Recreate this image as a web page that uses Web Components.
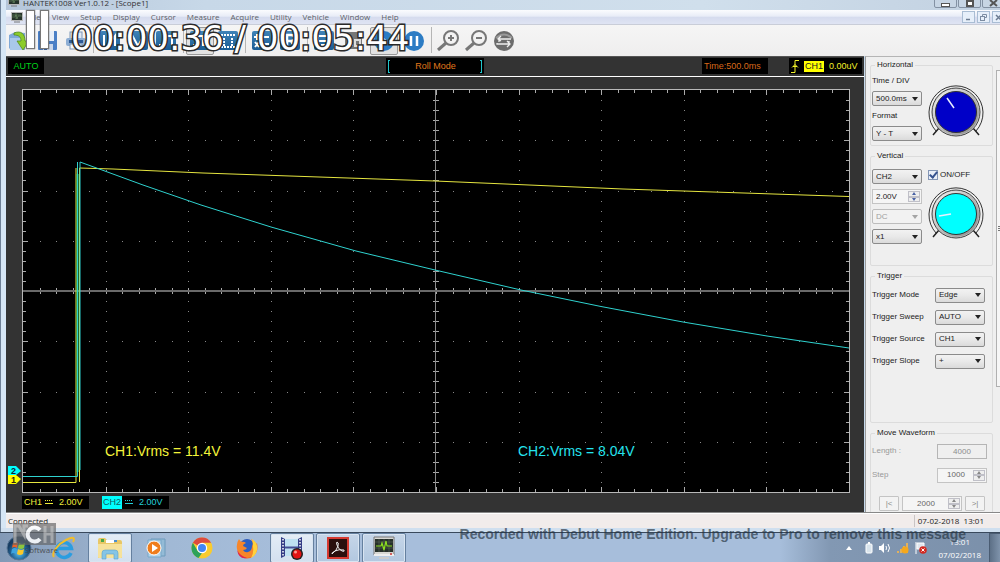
<!DOCTYPE html>
<html lang="en">
<head>
<meta charset="utf-8">
<title>HANTEK1008 - Scope1</title>
<style>
html,body{margin:0;height:100%}
body{font-family:"Liberation Sans",Arial,sans-serif;font-size:8px;line-height:10px;color:#222;overflow:hidden;--ui:"Open Sans","Noto Sans",sans-serif}
</style>
</head>
<body>
<desktop-screen></desktop-screen>
<script>
class Base extends HTMLElement {
  connectedCallback() {
    if (this.shadowRoot) return;
    const t = document.createElement('template');
    t.innerHTML = `<style>*{box-sizing:border-box}button,input,select{font:inherit;color:inherit;margin:0}${this.css()}</style>${this.html()}`;
    this.attachShadow({ mode: 'open' }).append(t.content.cloneNode(true));
  }
  css() { return ':host{display:block}'; }
  html() { return '<slot></slot>'; }
  attr(n, d = '') { return this.getAttribute(n) ?? d; }
}
const def = (name, css, html) => customElements.define(name, class extends Base {
  css() { return css; }
  html() { return typeof html === 'function' ? html(this) : html; }
});

/* ---------- window chrome ---------- */
const scopeIcon = `<svg width="12" height="11" viewBox="0 0 12 11"><rect x="0" y="0" width="12" height="9" fill="#b9b9b9"/><rect x="1" y="1" width="10" height="7" fill="#26332a"/><path d="M1 5h3l1-2 1 4 1-3h4M1 3h9M5 1v6" stroke="#6d8f63" stroke-width=".6" fill="none"/><path d="M3 10h6" stroke="#777"/></svg>`;

def('title-bar', `
:host{display:flex;height:10px;align-items:flex-end;justify-content:space-between;padding-left:2px;overflow:hidden;
 font-family:var(--ui);background:linear-gradient(90deg,#b5c6da,#c7d8e8 20%,#d0dfec 70%,#c2d1e1);color:#333}
.name{display:flex;gap:3px;align-items:flex-end;height:10px}
.name span{line-height:10px;height:12px}
svg{flex:none;margin-bottom:3px}
.btns{display:flex;gap:1px;margin-right:-5px}
button{width:23px;height:13px;margin-bottom:2px;border:1px solid #8391a3;border-radius:0 0 2px 2px;background:#c7d5e4;padding:0;display:grid;place-items:center}
button svg{margin:4px 0 0}`,
`<div class="name">${scopeIcon}<span>HANTEK1008 Ver1.0.12 - [Scope1]</span></div>
<div class="btns">
<button aria-label="Minimize"><svg width="9" height="6"><rect x=".5" y="2.5" width="8" height="3" fill="#fff" stroke="#555"/></svg></button>
<button aria-label="Maximize"><svg width="8" height="7"><rect x="1" y="1" width="6" height="5" fill="#fff" stroke="#555" stroke-width="2"/></svg></button>
<button aria-label="Close"><svg width="9" height="7"><path d="M1 0l7 6M8 0L1 6" stroke="#555" stroke-width="2"/></svg></button>
</div>`);

def('menu-bar', `
:host{display:flex;height:15px;align-items:center;padding-left:5px;font-family:var(--ui);color:#5c5f68;
 background:linear-gradient(#fbfcfe,#e8ecf7 45%,#d5dbee 50%,#dfe4f3);border-bottom:1px solid #c9cdd8}
nav{display:flex;gap:11px;margin-left:5px;flex:1}
a{color:inherit;text-decoration:none}
.mdi{display:flex;gap:2px;margin-right:-5px}
button{width:13px;height:12px;border:1px solid #a9bdd4;background:#e6effa;padding:0;display:grid;place-items:center}`,
`${scopeIcon}<nav>${['File','View','Setup','Display','Cursor','Measure','Acquire','Utility','Vehicle','Window','Help'].map(t=>`<a href="#">${t}</a>`).join('')}</nav>
<div class="mdi">
<button aria-label="Minimize child"><svg width="7" height="7"><path d="M1 5.500h4" stroke="#6c7c92" stroke-width="1.500"/></svg></button>
<button aria-label="Restore child"><svg width="7" height="7" fill="none" stroke="#7c8ca2"><path d="M2.500 2V.5h4v3H5"/><rect x=".5" y="2.500" width="4" height="4"/></svg></button>
<button aria-label="Close child"><svg width="7" height="7"><path d="M1 1l5 5M6 1L1 6" stroke="#6c7c92" stroke-width="1.500"/></svg></button>
</div>`);

/* ---------- toolbar ---------- */
const sq = g => `<svg width="22" height="22" viewBox="0 0 22 22"><defs><linearGradient id="b" x2="0" y2="1"><stop stop-color="#3f83b8"/><stop offset="1" stop-color="#1a5c94"/></linearGradient></defs><rect x="1" y="1" width="20" height="19" rx="2" fill="url(#b)"/><g stroke="#fff" stroke-width="2" fill="none">${g}</g></svg>`;
const icons = {
  open: `<svg width="28" height="22" viewBox="0 0 28 22"><path d="M2 5l6-3 10 1v17H4l-2-2z" fill="#7fa9d8"/><path d="M3 8h14v12H3z" fill="#a9c8ea"/><path d="M7 3c7-3 11 1 11 8h4l-6 9-6-9h4c0-4-2-6-7-6z" fill="#8ccc2a" stroke="#4b8411" stroke-width=".7"/></svg>`,
  save: `<svg width="20" height="22" viewBox="0 0 20 22"><rect x="0" y="1" width="19" height="19" rx="1" fill="#4a7fc6"/><rect x="3" y="1" width="13" height="10" fill="#e6eef9"/><rect x="5" y="14" width="10" height="6" fill="#c9d6ea"/><rect x="6" y="15" width="3" height="5" fill="#35609f"/></svg>`,
  print: `<svg width="22" height="22" viewBox="0 0 22 22"><rect x="5" y="2" width="12" height="7" fill="#dfe8f3" stroke="#7d97b8"/><rect x="1" y="8" width="20" height="8" rx="2" fill="#8eaed4"/><rect x="4" y="10" width="14" height="3" fill="#2d5b98"/><rect x="5" y="14" width="12" height="5" fill="#f6f9fd" stroke="#7d97b8"/></svg>`,
  a: sq('<path d="M5 5v11M9 15l7-9v10"/>'),
  b: sq('<path d="M5 5l6 11 6-11"/>'),
  c: sq('<path d="M4 15h5V6h8M17 6v9"/>'),
  d: sq('<path d="M4 15h3V6h7v9h4"/>'),
  e: sq('<path d="M4 5h14M7 8v8M15 8v8M4 17h14" stroke-dasharray="2 1"/>'),
  f: sq('<path d="M3 7h6M6 4v6M12 7h6M4 12l4 5M8 12l-4 5M12 14h6M12 17h6"/>'),
  g: sq('<path d="M8 17V5h4q4 0 4 3t-4 3H8m4 0l4 6" stroke-width="2.500"/>'),
  h: sq('<path d="M5 6h12v5H5zM8 15h7"/>'),
  i: `<svg width="20" height="22" viewBox="0 0 20 22"><rect x="1" y="2" width="17" height="17" rx="2" fill="#777"/><path d="M5 5v10h4M11 10h5v6h-5z" stroke="#ddd" stroke-width="2" fill="none"/></svg>`,
  play: `<svg width="22" height="22" viewBox="0 0 22 22"><circle cx="11" cy="11" r="10" fill="#2c7cc4"/><path d="M8 6l7 5-7 5z" fill="#e6f2fc"/></svg>`,
  pause: `<svg width="22" height="22" viewBox="0 0 22 22"><circle cx="11" cy="11" r="10" fill="#2c7cc4"/><path d="M8 6v10M14 6v10" stroke="#fff" stroke-width="2.500"/></svg>`,
  zin: `<svg width="24" height="22" viewBox="0 0 24 22" fill="none" stroke="#777"><circle cx="15" cy="8" r="7" stroke-width="2"/><path d="M10 13l-8 7" stroke-width="3"/><path d="M12 8h6M15 5v6" stroke-width="2"/></svg>`,
  zout: `<svg width="24" height="22" viewBox="0 0 24 22" fill="none" stroke="#777"><circle cx="15" cy="8" r="7" stroke-width="2"/><path d="M10 13l-8 7" stroke-width="3"/><path d="M12 8h6" stroke-width="2"/></svg>`,
  swap: `<svg width="22" height="22" viewBox="0 0 22 22"><circle cx="11" cy="11" r="10" fill="#6c6c6c"/><path d="M3 8q8-7 16 0" stroke="#999" stroke-width="2" fill="none"/><path d="M18 9H6v3M8 6L5 9l3 2M4 13v1h12v-3M14 17l3-3-3-3" stroke="#eee" stroke-width="1.300" fill="none"/></svg>`
};
def('tool-button', `
:host{display:block;width:28px}
button{width:28px;height:28px;padding:0;border:1px solid transparent;background:none;display:grid;place-items:center}
:host([pressed]) button{border-color:#999;background:#e2e2e2;border-radius:2px}`,
e => `<button aria-label="${e.attr('label')}">${icons[e.attr('icon')]}</button>`);
const tb = (i, l, p = '') => `<tool-button icon="${i}" label="${l}" ${p}></tool-button>`;
def('tool-bar', `
:host{display:flex;height:31px;align-items:center;background:linear-gradient(#f5f5f5,#efeeee)}
.g{display:flex}.w{gap:2px}
.g+.g::before{content:"";width:1px;height:26px;background:#b5b5b5;margin:0 2px 0 3px}
.w::before{margin-right:0 !important}`,
`<div class="g">${tb('open','Open')+tb('save','Save')+tb('print','Print')}</div>
<div class="g">${tb('a','Cursor trace')+tb('b','Falling')+tb('c','Rising')}</div>
<div class="g">${tb('d','Square','pressed')+tb('e','Pulse')}</div>
<div class="g">${tb('f','Math')+tb('g','Reference')}</div>
<div class="g w">${tb('h','Display')+tb('i','Log')+tb('play','Run','pressed')+tb('pause','Pause')}</div>
<div class="g">${tb('zin','Zoom in')+tb('zout','Zoom out')+tb('swap','Swap')}</div>`);

/* ---------- oscilloscope ---------- */
def('scope-readout', `
:host{display:flex;height:20px;padding:1px 2px 2px;background:#333;border-bottom:1px solid #fff;font-size:9px;box-sizing:border-box;justify-content:space-between}
div{background:#000;display:flex;align-items:center;white-space:nowrap}
.auto{color:#00d21c;width:36px;justify-content:center}
.l{flex:343 0 0}.m{flex:218 0 0}.r{flex:21 0 0}
.roll{width:98px;color:#e0781c;justify-content:space-between;padding:0 2px}
.roll b{width:2px;height:13px;border:1px solid #21c6cc;border-width:1px 0 1px 1px}
.roll b:last-child{border-width:1px 1px 1px 0}
.time{color:#d8691a;width:66px;padding-left:2px}
.trig{color:#f2f22a;width:73px;gap:5px;padding-left:2px}
.trig mark{background:#ff0;color:#222;padding:0 1px;line-height:11px}`,
`<div class="auto">AUTO</div><i class="l"></i><div class="roll"><b></b><span>Roll Mode</span><b></b></div><i class="m"></i>
<div class="time">Time:500.0ms</div><i class="r"></i>
<div class="trig"><svg width="8" height="13" viewBox="0 0 8 13" fill="none" stroke="#f2f22a"><path d="M0 12.500h4V.5h4M1 7.500l3-3 3 3M2 6.500h4"/></svg><mark>CH1</mark><span>0.00uV</span></div>`);

function gridSvg() {
  const W = 826, H = 402, dx = W / 50, dy = H / 40;
  let dots = '', ticks = '';
  for (let i = 1; i < 50; i++) {
    const x = Math.round(i * dx) + .5, big = i % 5 === 0 ? 5 : 3;
    ticks += `M${x} 0v${big}M${x} ${H}v-${big}M${x} 198v6`;
    for (let r = 1; r < 8; r++) if (r !== 4) dots += `M${x - .5} ${Math.round(r * H / 8) + .5}h1`;
  }
  for (let j = 1; j < 40; j++) {
    const y = Math.round(j * dy) + .5, big = j % 5 === 0 ? 5 : 3;
    ticks += `M0 ${y}h${big}M${W} ${y}h-${big}M410 ${y}h6`;
    for (let c = 1; c < 10; c++) if (c !== 5) dots += `M${Math.round(c * W / 10)} ${y}h1`;
  }
  return `<svg viewBox="0 0 ${W} ${H}" preserveAspectRatio="none" fill="none" aria-label="Waveforms">
<path d="${dots}" stroke="#888"/><path d="${ticks}" stroke="#aaa"/>
<path d="M412.500 0V402" stroke="#8a8a8a"/><path d="M0 201H826" stroke="#6a6a6a" stroke-width="2"/>
<path d="M0 392.500H53V78M56.500 392V78L90 79 180 83 412 91 600 99 826 106.500" stroke="#e6e640"/>
<path d="M54.500 84V382" stroke="#3fd05a" stroke-width="2"/>
<path d="M0 386.500H54.500V72M57 380V72L79 80 120 95 178 115 248 137 333 161 412 180 498 200 578 216.500 660 232 744 246 826 258" stroke="#2fd2cf"/>
</svg>`;
}
def('scope-plot', `
:host{display:grid;grid-template-rows:minmax(0,1fr);border:1px solid #b8b8b8;background:#000;min-height:0;overflow:hidden}
svg{grid-area:1/1;width:100%;height:100%;min-height:0;display:block}
.m{grid-area:1/1;align-self:end;display:grid;grid-template-columns:1fr 1fr;z-index:1;font-size:14px;line-height:16px;padding-bottom:33px}
span{padding-left:82px}.a{color:#f4f43a}.b{color:#25e3ee}`,
`${gridSvg()}<div class="m"><span class="a">CH1:Vrms = 11.4V</span><span class="b">CH2:Vrms = 8.04V</span></div>`);

def('scope-view', `
:host{display:grid;grid-template-rows:20px minmax(0,1fr) 19px;background:#333;min-width:0;min-height:0;border-top:1px solid #555;box-sizing:border-box}
.body{display:grid;grid-template-columns:16px 1fr 14px;grid-template-rows:minmax(0,1fr);padding-top:12px;min-height:0}
.gut{display:flex;flex-direction:column;justify-content:flex-end;padding:0 0 8px 2px}
.gut svg{display:block}
.ch{display:flex;gap:13px;padding:3px 16px 3px;font-size:9px}
.ch div{background:#000;width:67px;display:flex;gap:3px;align-items:center;padding-left:2px;white-space:nowrap;line-height:13px}
.ch .v{margin-left:3px}
.c1{color:#eeee3a}.c2{color:#23d2dc}
.c2{padding-left:0 !important}
mark{background:#0ff;color:#12595e;padding:0 1px}`,
`<scope-readout></scope-readout>
<div class="body"><div class="gut"><svg width="13" height="19" viewBox="0 0 13 19" font-family="Liberation Sans" font-size="9" font-weight="bold"><path d="M0 9h8l5 4-5 5H0z" fill="#ff0"/><path d="M0 0h8l5 5-5 4H0z" fill="#0ff"/><text x="3" y="8" fill="#123">2</text><text x="3" y="17" fill="#321">1</text></svg></div>
<scope-plot></scope-plot></div>
<div class="ch"><div class="c1"><span>CH1</span><svg width="8" height="5" stroke="#eeee3a"><path d="M0 .5h8" stroke-dasharray="1 1"/><path d="M0 3.500h8"/></svg><span class="v">2.00V</span></div>
<div class="c2"><mark>CH2</mark><svg width="8" height="5" stroke="#23d2dc"><path d="M0 .5h8" stroke-dasharray="1 1"/><path d="M0 3.500h8"/></svg><span class="v">2.00V</span></div></div>`);

/* ---------- side panel controls ---------- */
def('combo-box', `
:host{display:grid;width:50px;height:15px}
select{grid-area:1/1;appearance:none;width:100%;height:15px;border:1px solid #8b8b8b;border-radius:2px;padding:0 0 0 3px;background:linear-gradient(#f2f2f2,#e9e9e9 50%,#dadada);line-height:12px;color:#222;opacity:1}
i{grid-area:1/1;justify-self:end;align-self:center;margin-right:4px;border:3px solid transparent;border-top:4px solid #222;border-bottom:0;pointer-events:none}
:host([disabled]) select{color:#a0a0a0;background:#f2f2f2;border-color:#bdbdbd}
:host([disabled]) i{border-top-color:#a5a5a5}`,
e => `<select aria-label="${e.attr('label')}" ${e.hasAttribute('disabled') ? 'disabled' : ''}><option>${e.attr('value')}</option></select><i></i>`);

def('spin-box', `
:host{display:grid;grid-template-columns:1fr 12px;width:var(--w,50px);height:15px;border:1px solid #c4c4c4;padding:1px;box-sizing:border-box;background:#f5f5f5}
input{width:100%;min-width:0;border:0;padding:0 2px;background:none;text-align:var(--al,center);color:var(--c,#666)}
div{display:grid;grid-template-rows:1fr 1fr;min-height:0}
button{padding:0;border:1px solid #c0c0c8;background:#eee;display:grid;place-items:center;min-height:0;overflow:hidden;color:var(--ac,#888)}
svg{display:block}`,
e => `<input type="text" aria-label="${e.attr('label')}" value="${e.attr('value')}"><div>
<button aria-label="Increase"><svg width="4" height="3" fill="currentColor"><path d="M0 3l2-3 2 3z"/></svg></button>
<button aria-label="Decrease"><svg width="4" height="3" fill="currentColor"><path d="M0 0l2 3 2-3z"/></svg></button></div>`);

def('dial-knob', `:host{display:block;width:56px;height:52px}svg{display:block}`,
e => `<svg width="56" height="52" viewBox="0 0 56 52" fill="none" role="img" aria-label="${e.attr('label')}">
<defs><linearGradient id="r" x1="0" y1="0" x2="1" y2="1"><stop stop-color="#f6f6f6"/><stop offset=".5" stop-color="#bbb"/><stop offset="1" stop-color="#888"/></linearGradient></defs>
<path d="M8 46A27 27 0 1 1 48 46" stroke="#333"/><path d="M11 43l-6 7M45 43l6 7" stroke="#222" stroke-width="1.500"/>
<circle cx="28" cy="27" r="24" fill="#ccc" stroke="#444"/><circle cx="28" cy="27" r="23" fill="url(#r)"/>
<circle cx="28" cy="27" r="20.500" fill="${e.attr('color')}" stroke="#333"/>
<path d="${e.attr('mark')}" stroke="#e9efff" stroke-width="1.500"/></svg>`);

def('group-box', `
:host{display:block}
fieldset{margin:0;border:1px solid #dcdcdc;border-radius:2px;height:100%;min-width:0;padding:0 0 0 1px}
legend{margin-left:3px;padding:0 2px;line-height:10px;height:10px}
`, e => `<fieldset><legend>${e.attr('legend')}</legend><slot></slot></fieldset>`);

def('side-panel', `
:host{display:grid;grid-template-columns:1fr 4px;width:135px;background:#efefef;border-left:1px solid #9a9a9a;border-top:1px solid #b5b5b5;box-sizing:border-box;overflow:hidden;min-height:0}
.col{display:flex;flex-direction:column;gap:5px;padding:3px 3px 0 4px;min-width:0;min-height:0}
.col>*{flex:none}
.strip{border-left:1px solid #b0b0b0;border-top:1px solid #b0b0b0;border-bottom:1px solid #b0b0b0;background:#f6f6f6;margin-top:13px;height:317px;display:grid;align-items:center;justify-items:end}
.strip::before{content:"";width:2px;height:6px;background:repeating-linear-gradient(#777 0 1px,transparent 1px 2px)}
.h{height:86px}.v{height:115px}.t{height:152px}.m{height:100px}
.two{display:grid;grid-template-columns:50px 56px;gap:6px}
.stack{display:flex;flex-direction:column;gap:5px}
.h .stack{padding-top:6px}
.h dial-knob{margin-top:15px}
.v .stack{padding-top:8px}
.v .knob{padding-top:8px;display:flex;flex-direction:column;gap:6px}
.v .knob label{display:flex;gap:2px;align-items:center;white-space:nowrap;height:12px}
input[type=checkbox]{appearance:none;width:10px;height:10px;border:1px solid #8496b5;background:#e9eef8;display:grid;place-items:center}
input[type=checkbox]::before{content:"";width:3px;height:6px;border:solid #35528f;border-width:0 2px 2px 0;transform:rotate(40deg);margin-top:-2px}
.row{display:grid;grid-template-columns:1fr auto;align-items:center;height:22px;padding-right:7px}
.t .rows{padding-top:3px}
.m .row{height:24px;color:#999;padding-right:5px}
.m .rows{padding-top:1px}
.m input{width:50px;height:15px;border:1px solid #b5b5b5;background:#efefef;text-align:center;color:#8d8d8d;padding:0}
.nav{display:grid;grid-template-columns:20px 60px 20px;gap:3px;padding:9px 0 0 7px}
.nav button{height:15px;border:1px solid #c4c4c4;border-radius:1px;background:#f3f3f3;padding:0;color:#888;line-height:12px}
.nav spin-box{--w:60px}
`,
`<div class="col">
<group-box class="h" legend="Horizontal"><div class="two"><div class="stack"><span>Time / DIV</span><combo-box label="Time / DIV" value="500.0ms"></combo-box><span>Format</span><combo-box label="Format" value="Y - T"></combo-box></div>
<dial-knob label="Time knob" color="#0000c8" mark="M19 13l7 10"></dial-knob></div></group-box>
<group-box class="v" legend="Vertical"><div class="two"><div class="stack"><combo-box label="Channel" value="CH2"></combo-box><spin-box label="Volts" value="2.00V" style="--c:#222;--al:left;--ac:#4a62a5"></spin-box><combo-box disabled label="Coupling" value="DC"></combo-box><combo-box label="Probe" value="x1"></combo-box></div>
<div class="knob"><label><input type="checkbox" checked>ON/OFF</label><dial-knob label="Volts knob" color="#00ffff" mark="M11 29l12-2"></dial-knob></div></div></group-box>
<group-box class="t" legend="Trigger"><div class="rows">
${[['Trigger Mode','Edge'],['Trigger Sweep','AUTO'],['Trigger Source','CH1'],['Trigger Slope','+']].map(([l,v])=>`<div class="row"><span>${l}</span><combo-box label="${l}" value="${v}"></combo-box></div>`).join('')}
</div></group-box>
<group-box class="m" legend="Move Waveform"><div class="rows">
<div class="row"><label for="len">Length :</label><input id="len" type="text" value="4000"></div>
<div class="row"><span>Step</span><spin-box label="Step" value="1000"></spin-box></div></div>
<div class="nav"><button>|&lt;</button><spin-box label="Position" value="2000"></spin-box><button>&gt;|</button></div></group-box>
</div><div class="strip"></div>`);

def('status-bar', `
:host{display:flex;justify-content:space-between;align-items:center;height:16px;background:#f1eceb;border-top:1px solid #888;box-shadow:inset 0 1px #fff;font-family:var(--ui);color:#222;padding:0 16px 0 2px;box-sizing:border-box}
.d{border-left:1px solid #c9c4c4;padding-left:3px;line-height:12px}`,
`<span>Connected</span><span class="d">07-02-2018&nbsp; 13:01</span>`);

/* ---------- taskbar ---------- */
const apps = {
  start: `<svg width="28" height="28" viewBox="0 0 28 28"><defs><radialGradient id="o" cy=".7"><stop stop-color="#5cc4ee"/><stop offset=".6" stop-color="#246a9e"/><stop offset="1" stop-color="#173c62"/></radialGradient></defs><circle cx="14" cy="14" r="12" fill="url(#o)" stroke="#5a7896"/><path d="M8 9q3-2 5 0l-1 5q-3-2-5 0z" fill="#e8642a"/><path d="M14 9q3 2 6 0l-1 5q-3 2-6 0z" fill="#8cc63e"/><path d="M7 15q3-2 5 0l-1 5q-3-2-5 0z" fill="#3da4e0"/><path d="M13 15q3 2 6 0l-1 5q-3 2-6 0z" fill="#fbc828"/></svg>`,
  ie: `<svg width="24" height="24" viewBox="0 0 24 24" fill="none"><path d="M19 17A7.500 7.500 0 1 1 19.500 12.500H6" stroke="#2b9de0" stroke-width="3.500"/><path d="M2 21C-1 17 6 8 14 4s9-2 7 2" stroke="#f0bd2c" stroke-width="2"/></svg>`,
  folder: `<svg width="26" height="24" viewBox="0 0 26 24"><path d="M1 4q0-2 2-2h5l2 2h13q2 0 2 2v16H1z" fill="#e8c766"/><path d="M4 3h3v3H4z" fill="#4aa84a"/><path d="M9 4h8v3H9z" fill="#fff"/><path d="M17 4h3v2h-3z" fill="#4a90d0"/><path d="M1 8h24v13q0 1-1 1H2q-1 0-1-1z" fill="#f6e29b"/><path d="M5 23v-6q0-3 3-3h10q3 0 3 3v6h-4v-5H9v5z" fill="#86c5e6" stroke="#5ba3cc" stroke-width=".6"/></svg>`,
  wmp: `<svg width="22" height="22" viewBox="0 0 22 22"><path d="M6 2h14v17H6z" fill="#94bbd6" stroke="#6e9bbc"/><path d="M3 3h13v17H3z" fill="#b4d5ea" stroke="#79a7c8"/><circle cx="9" cy="11" r="7" fill="#ef7d1c" stroke="#fff"/><path d="M7 7l6 4-6 4z" fill="#fff"/></svg>`,
  chrome: `<svg width="22" height="22" viewBox="0 0 22 22"><circle cx="11" cy="11" r="10.500" fill="#f9cb2e"/><path d="M11 11L1.900 5.800A10.500 10.500 0 0 1 20.100 5.800H11z" fill="#dd4b3e"/><path d="M1.900 5.800L7 14.500l4 1.500-3.500 5A10.500 10.500 0 0 1 1.900 5.800z" fill="#2ea25a"/><circle cx="11" cy="11" r="5.200" fill="#fff"/><circle cx="11" cy="11" r="4" fill="#4285f4"/></svg>`,
  ff: `<svg width="24" height="24" viewBox="0 0 24 24"><circle cx="12" cy="13" r="9.500" fill="#f46a20"/><circle cx="12" cy="10" r="7" fill="#2a5fc4"/><path d="M2 13q-1-6 2-10l2 3q3-1 5 1-3 1-3 3l4 2q-1 2-4 2 2 3 5 2 4-1 4-6 2-3-1-7 4 2 5 5l1-1q2 8-3 12-6 5-12 1-4-3-5-7z" fill="#f7862a"/><path d="M17 3q6 4 5 11-1 6-6 8 3-5 2-11 0-5-1-8z" fill="#ffd23c"/><path d="M2 14q3 6 10 8-8 2-10-8z" fill="#e2264d"/></svg>`,
  debut: `<svg width="24" height="24" viewBox="0 0 24 24"><path d="M1 1l4 2h13l4-2v20l-4-1H5l-4 2z" fill="#bfe0f2"/><path d="M1 1l4 2v17l-4 2zM22 1l-4 2v17l4 1z" fill="#343c86"/><path d="M3 3v18M20 3v18" stroke="#fff" stroke-width="1.500" stroke-dasharray="1.500 1.500"/><path d="M5 11.500h13" stroke="#444e94" stroke-width="2"/><circle cx="17" cy="18" r="6" fill="#222"/><circle cx="17" cy="18" r="4.500" fill="#e21414"/><circle cx="15.500" cy="16" r="1.500" fill="#ff9a90"/></svg>`,
  pdf: `<svg width="22" height="22" viewBox="0 0 22 22"><rect x="1" y="1" width="20" height="20" fill="#2b0f0d" stroke="#d63a31" stroke-width="2"/><path d="M10 5q2 0 1 4t-6 8q-1-1 3-3t9-1q1 2-2 1-4-2-5-6-1-3 0-3z" fill="none" stroke="#eee"/></svg>`,
  scope: `<svg width="22" height="24" viewBox="0 0 22 24"><path d="M1 1h20v18H1z" fill="#d8d8d4" stroke="#777"/><path d="M2 3h18v13H2z" fill="#26302a"/><path d="M2 6h18M2 12h18M6 3v13M11 3v13M16 3v13" stroke="#5b665d" stroke-width=".6"/><path d="M3 10h5l1-3 2 7 2-9 1 5h5" stroke="#8de020" fill="none" stroke-width="1.200"/><path d="M1 18h20v2H1z" fill="#eee"/><circle cx="18" cy="18" r="1" fill="#c33"/><path d="M6 22h10" stroke="#ccc" stroke-width="2"/></svg>`
};
def('task-button', `
:host{display:block;width:44px}
button{width:100%;height:30px;border:1px solid transparent;background:none;padding:0;display:grid;place-items:center}
:host([open]) button{border-color:#65809f;border-radius:2px;background:linear-gradient(#c6d6e8,#b2c8e0);box-shadow:inset 0 0 0 1px #d8e4f1}
:host([active]) button{background:linear-gradient(#e4edf6,#d3e0ef)}`,
e => `<button aria-label="${e.attr('label')}">${apps[e.attr('app')]}</button>`);
const tk = (a, l, p = '') => `<task-button app="${a}" label="${l}" ${p}></task-button>`;
def('task-bar', `
:host{display:flex;height:30px;border-top:1px solid #39495c;box-sizing:border-box;justify-content:space-between;overflow:hidden;
 background:linear-gradient(90deg,#8299b6,#93aac6 7%,#a0b8d4 15%,#a7bedb 30%,#a7bedb 78%,#8298b3 83%,#7b90aa)}
.apps{display:grid;grid-template-columns:42px 44px 44px 44px 44px 42px 44px 44px 44px;gap:0 2px;justify-items:center;margin-left:-2px}
.tray{display:flex;align-items:center;color:#fff}
.tray svg{display:block}
.ic{display:flex;gap:6px;align-items:center;margin-right:12px}
time{font-family:var(--ui);text-align:center;line-height:13px;margin-right:8px}
.show{width:11px;height:30px;border:1px solid #4a5c72;border-right:0;background:linear-gradient(90deg,#5d7087,#7f93ab);padding:0}`,
`<div class="apps">${tk('start','Start')+tk('ie','Internet Explorer')+tk('folder','Explorer','open active')+tk('wmp','Media Player')+tk('chrome','Chrome')+tk('ff','Firefox')+tk('debut','Debut','open active')+tk('pdf','Acrobat','open')+tk('scope','Hantek','open')}</div>
<div class="tray"><div class="ic">
<svg width="18" height="12"><path d="M5 8l3-4 3 4z" fill="#fff"/></svg>
<svg width="8" height="12" viewBox="0 0 8 12"><rect x="1" y="2" width="6" height="9" rx="1" fill="#d9e4ec" stroke="#fff"/><path d="M3 1h2" stroke="#fff" stroke-width="2"/></svg>
<svg width="12" height="12" viewBox="0 0 12 12"><path d="M0 4h2l3-3v10L2 8H0z" fill="#fff"/><path d="M7 4q1 2 0 4M9 2q3 4 0 8" stroke="#fff" fill="none"/></svg>
<svg width="12" height="12" viewBox="0 0 12 12"><path d="M0 11V9h2v2zM3 11V7h2v4zM6 11V4h2v7zM9 11V1h2v10z" fill="#e3b15c"/><circle cx="8" cy="8" r="3.500" fill="#f6a81c"/></svg>
<svg width="12" height="12" viewBox="0 0 12 12"><path d="M1 0v12M2 1h7v6H2z" stroke="#fff" fill="#dfe6ee"/><circle cx="8" cy="8" r="3.800" fill="#d22a22"/><path d="M6.500 6.500l3 3M9.500 6.500l-3 3" stroke="#fff"/></svg>
</div><time>13:01<br>07/02/2018</time><button class="show" aria-label="Show desktop"></button></div>`);

/* ---------- recorder overlays ---------- */
def('recorder-overlay', `
:host{position:absolute;inset:0;pointer-events:none;overflow:hidden}
.bars{position:absolute;left:26px;top:10px;display:flex;gap:5px}
.bars i{width:9px;height:39px;background:#fff;border:1px solid #777;box-shadow:0 0 1px #444}
.time{position:absolute;left:71px;top:18px;font:34px/40px "DejaVu Sans",sans-serif;color:#fff;white-space:pre;-webkit-text-stroke:3px #2a2a2a;paint-order:stroke fill}
.mark{position:absolute;right:34px;bottom:20px;font:bold 14px/16px "Liberation Sans",sans-serif;color:rgba(35,50,65,.68);white-space:nowrap}
.nch{position:absolute;left:12px;bottom:7px;width:46px;display:grid;color:#444;font-family:var(--ui);text-align:right;opacity:.85}
`,
`<div class="bars"><i></i><i></i></div><div class="time">00:00:36 / 00:05:44</div>
<div class="mark">Recorded with Debut Home Edition. Upgrade to Pro to remove this message</div>
<div class="nch"><svg width="44" height="22" viewBox="0 0 44 22"><path d="M1 0h43v22H1z" fill="#666" opacity=".8"/><path d="M3 20V3h4l5 9V3h4M33 3v17M33 11h7M40 3v17" stroke="#a9a9a9" stroke-width="3" fill="none"/><path d="M28 7a7 7 0 1 0 0 9" stroke="#fff" stroke-width="4" fill="none"/></svg><span>Software</span></div>`);

def('desktop-screen', `
:host{display:grid;grid-template-rows:minmax(0,1fr) 30px;height:100vh;position:relative;background:#a7bedb}
.win{display:grid;grid-template-rows:10px 15px 31px minmax(0,1fr) 16px 4px;padding-left:6px;min-height:0;background:linear-gradient(90deg,#6f8197 0 1px,#d6e6f5 1px,#c3d7ea)}
.main{display:grid;grid-template-columns:1fr 135px;grid-template-rows:minmax(0,1fr);min-height:0;gap:1px}
.edge{background:#cfdfef;margin-left:-5px}`,
`<div class="win"><title-bar></title-bar><menu-bar></menu-bar><tool-bar></tool-bar>
<div class="main"><scope-view></scope-view><side-panel></side-panel></div>
<status-bar></status-bar><div class="edge"></div></div>
<task-bar></task-bar><recorder-overlay></recorder-overlay>`);
</script>
</body>
</html>
